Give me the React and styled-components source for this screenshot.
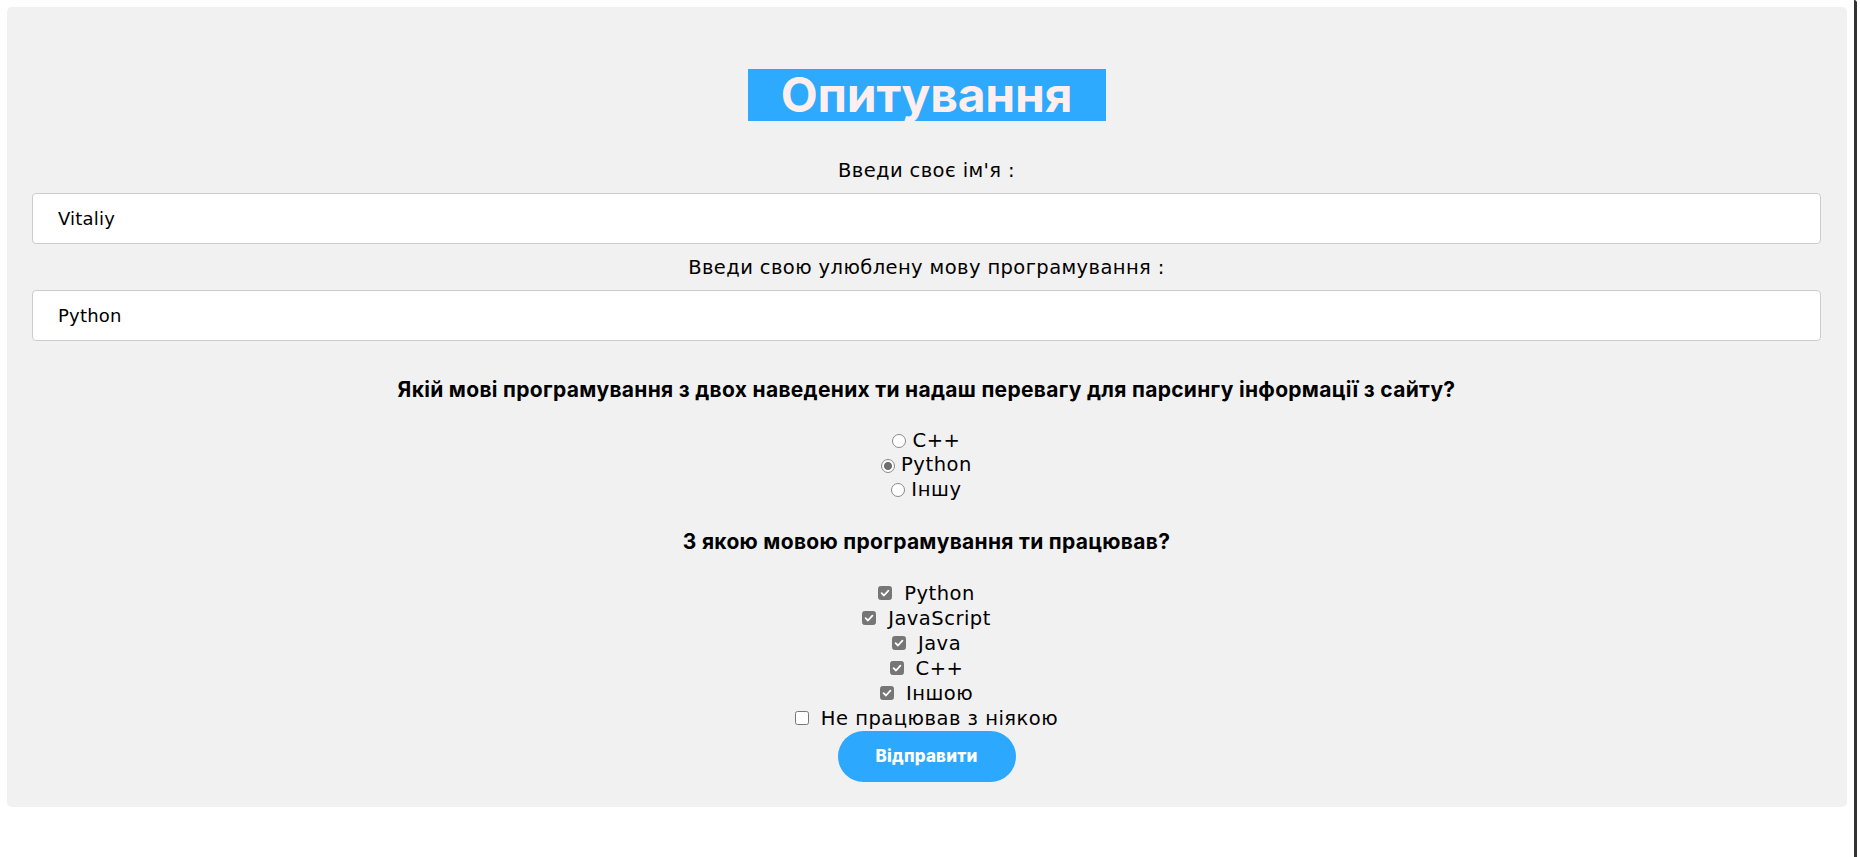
import React, { useState } from "react";
import styled, { createGlobalStyle } from "styled-components";

const Global = createGlobalStyle`
  html, body { margin: 0; padding: 0; background: #ffffff; }
  body { font-family: "DejaVu Sans", "Noto Sans", sans-serif; color: #000; }
  * { box-sizing: border-box; }
`;

const Shell = styled.div`
  display: flex;
  min-height: 857px;
  background: #fff;
`;

const Main = styled.main`
  flex: 1;
  padding: 7px 7px 0 7px;
`;

const Edge = styled.div`
  width: 3px;
  margin-right: 3px;
  background: #333;
  border-top-right-radius: 3px;
`;

const Panel = styled.form`
  background: #f1f1f1;
  border-radius: 5px;
  padding: 62px 26px 25px 25px;
  text-align: center;
`;

const Title = styled.h1`
  width: 358px;
  height: 52px;
  margin: 0 auto;
  background: #2da9fd;
  color: #fdeef0;
  font-family: Inter, "DejaVu Sans", sans-serif;
  font-weight: 700;
  font-size: 48px;
  line-height: 52px;
  letter-spacing: -0.2px;
`;

const Label = styled.label`
  display: block;
  font-size: 19.5px;
  letter-spacing: 0.4px;
  line-height: 22px;
  margin: ${(p) => (p.$first ? "39px" : "0")} 0 11px;
`;

const TextInput = styled.input`
  display: block;
  width: 100%;
  height: 51px;
  margin: 0 0 13px;
  padding: 0 25px;
  border: 1px solid #cccccc;
  border-radius: 4px;
  background: #fff;
  font-family: "DejaVu Sans", sans-serif;
  font-size: 18px;
  letter-spacing: 0.2px;
  color: #000;
  outline: none;
`;

const Question = styled.h3`
  margin: ${(p) => p.$top} 0 ${(p) => p.$bottom};
  font-family: Inter, "DejaVu Sans", sans-serif;
  font-weight: 700;
  font-size: 21px;
  letter-spacing: 0.3px;
  line-height: 24px;
`;

const OptionList = styled.div`
  display: flex;
  flex-direction: column;
  align-items: center;
`;

const OptionRow = styled.label`
  display: flex;
  align-items: center;
  gap: ${(p) => p.$gap}px;
  font-size: 19.5px;
  letter-spacing: ${(p) => p.$ls}px;
  line-height: ${(p) => p.$lh}px;
  cursor: pointer;
`;

const Hidden = styled.input`
  position: absolute;
  opacity: 0;
  width: 0;
  height: 0;
  margin: 0;
`;

const RadioMark = styled.span`
  width: 14px;
  height: 14px;
  border-radius: 50%;
  border: 1px solid #8a8a8a;
  background: ${(p) =>
    p.$on
      ? "radial-gradient(circle, #6f6f6f 0 3.6px, #ffffff 4.4px)"
      : "#ffffff"};
  flex: none;
`;

const CheckMark = styled.span`
  width: 14px;
  height: 14px;
  border-radius: 2.5px;
  border: 1px solid #767676;
  background: ${(p) => (p.$on ? "#767676" : "#ffffff")};
  display: flex;
  align-items: center;
  justify-content: center;
  flex: none;
`;

const Submit = styled.button`
  display: block;
  margin: 0 auto;
  width: 178px;
  height: 51px;
  border: none;
  border-radius: 26px;
  background: #2ca8fe;
  color: #fff;
  font-family: Inter, "DejaVu Sans", sans-serif;
  font-weight: 800;
  font-size: 17px;
  letter-spacing: 0.2px;
  cursor: pointer;
`;

const Radio = ({ label, checked, onChange }) => (
  <OptionRow $gap={6} $lh={24.5} $ls={0.6}>
    <Hidden type="radio" name="lang" checked={checked} onChange={onChange} />
    <RadioMark $on={checked} />
    {label}
  </OptionRow>
);

const Check = ({ label, checked, onChange }) => (
  <OptionRow $gap={12} $lh={25} $ls={0.5}>
    <Hidden type="checkbox" checked={checked} onChange={onChange} />
    <CheckMark $on={checked}>
      {checked && (
        <svg width="10" height="10" viewBox="0 0 10 10">
          <path d="M1.6 5.2 L4 7.5 L8.4 2.6" fill="none" stroke="#fff" strokeWidth="1.8" strokeLinecap="round" strokeLinejoin="round" />
        </svg>
      )}
    </CheckMark>
    {label}
  </OptionRow>
);

export default function App() {
  const [name, setName] = useState("Vitaliy");
  const [fav, setFav] = useState("Python");
  const [parse, setParse] = useState("Python");
  const [used, setUsed] = useState({
    Python: true,
    JavaScript: true,
    Java: true,
    "C++": true,
    "Іншою": true,
    "Не працював з ніякою": false,
  });

  return (
    <Shell>
      <Global />
      <Main>
        <Panel onSubmit={(e) => e.preventDefault()}>
          <Title>Опитування</Title>
          <Label $first htmlFor="name">Введи своє ім'я :</Label>
          <TextInput id="name" value={name} onChange={(e) => setName(e.target.value)} />
          <Label htmlFor="fav">Введи свою улюблену мову програмування :</Label>
          <TextInput id="fav" value={fav} onChange={(e) => setFav(e.target.value)} />
          <Question $top="37px" $bottom="26.75px">
            Якій мові програмування з двох наведених ти надаш перевагу для парсингу інформації з сайту?
          </Question>
          <OptionList>
            {["C++", "Python", "Іншу"].map((l) => (
              <Radio key={l} label={l} checked={parse === l} onChange={() => setParse(l)} />
            ))}
          </OptionList>
          <Question $top="27.5px" $bottom="26.75px">
            З якою мовою програмування ти працював?
          </Question>
          <OptionList>
            {Object.keys(used).map((l) => (
              <Check
                key={l}
                label={l}
                checked={used[l]}
                onChange={() => setUsed({ ...used, [l]: !used[l] })}
              />
            ))}
          </OptionList>
          <Submit type="submit">Відправити</Submit>
        </Panel>
      </Main>
      <Edge />
    </Shell>
  );
}
